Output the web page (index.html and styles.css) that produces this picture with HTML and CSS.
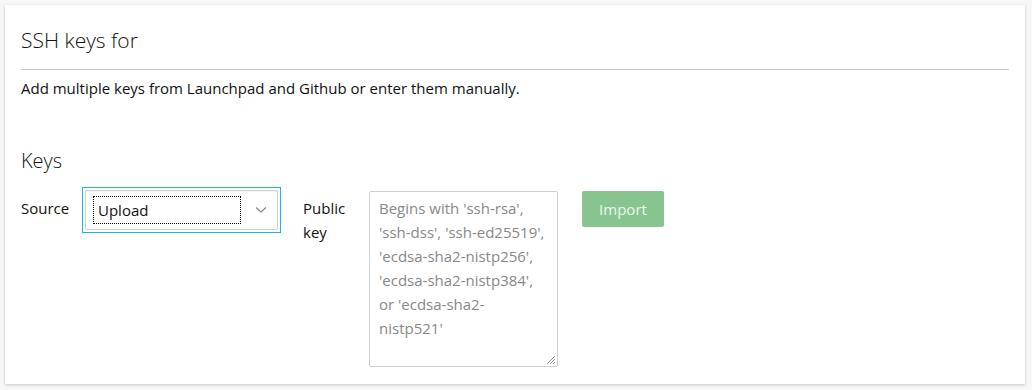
FILE: index.html
```html
<!DOCTYPE html>
<html>
<head>
<meta charset="utf-8">
<link rel="stylesheet" href="styles.css">
</head>
<body>
<div class="card">
  <h2 class="title">SSH keys for</h2>
  <hr class="rule">
  <p class="intro">Add multiple keys from Launchpad and Github or enter them manually.</p>
  <h3 class="section">Keys</h3>
  <div class="form-row">
    <label class="label label-source">Source</label>
    <div class="select-ring">
      <div class="select">
        <span class="select-value">Upload</span>
        <svg class="chevron" width="12" height="8" viewBox="0 0 12 8"><path d="M1 1.5 L6 6 L11 1.5" fill="none" stroke="#888" stroke-width="1.2"/></svg>
      </div>
    </div>
    <label class="label label-key">Public key</label>
    <div class="textarea">
      <span class="placeholder">Begins with 'ssh-rsa', 'ssh-dss', 'ssh-ed25519', 'ecdsa-sha2-nistp256', 'ecdsa-sha2-nistp384', or 'ecdsa-sha2-nistp521'</span>
      <svg class="grip" width="11" height="11" viewBox="0 0 11 11"><path d="M10 2 L2 10 M10 5 L5 10 M10 8 L8 10" stroke="#999" stroke-width="1"/></svg>
    </div>
    <button class="btn">Import</button>
  </div>
</div>
</body>
</html>
```

FILE: styles.css
```css
* { box-sizing: border-box; }
html, body { margin: 0; padding: 0; }
body {
  background: #f7f7f7;
  font-family: "Open Sans", "Noto Sans", sans-serif;
  color: #111;
  padding: 5px 7px 6px 5px;
}
.card {
  background: #fff;
  box-shadow: 0 1px 3px rgba(0,0,0,0.2);
  padding: 0 16px 17px 16px;
  height: 379px;
}
.title {
  margin: 0;
  padding-top: 21px;
  font-size: 21px;
  font-weight: 300;
  line-height: 28px;
}
.rule {
  border: 0;
  border-top: 1px solid #cdcdcd;
  margin: 15px 0 0 0;
}
.intro {
  margin: 8px 0 0 0;
  font-size: 15px;
  line-height: 20px;
}
.section {
  margin: 49px 0 0 0;
  font-size: 20px;
  font-weight: 300;
  line-height: 28px;
}
.form-row {
  display: flex;
  align-items: flex-start;
  margin-top: 12px;
}
.label {
  font-size: 15px;
  line-height: 24px;
  padding-top: 9px;
}
.label-source { width: 61px; }
.label-key { width: 66px; margin-left: 22px; }
.select-ring {
  border: 1px solid #19b6ee;
  padding: 2px;
  width: 199px;
  height: 46px;
}
.select {
  border: 1px solid #d0d0d0;
  border-radius: 2px;
  box-shadow: inset 0 1px 1px rgba(0,0,0,0.05);
  height: 40px;
  display: flex;
  align-items: center;
  justify-content: space-between;
  padding: 0 8px 0 8px;
}
.select-value {
  outline: 1px dotted #000;
  width: 146px;
  height: 26px;
  font-size: 15px;
  line-height: 26px;
  padding-left: 4px;
}
.chevron { margin-right: 2px; }
.textarea {
  position: relative;
  width: 189px;
  height: 176px;
  margin-top: 4px;
  border: 1px solid #cfcfcf;
  border-radius: 2px;
  padding: 4px 9px;
  font-size: 15px;
  line-height: 24px;
  color: #888;
}
.grip { position: absolute; right: 1px; bottom: 1px; }
.btn {
  margin-left: 24px;
  margin-top: 4px;
  width: 82px;
  height: 36px;
  border: 0;
  border-radius: 2px;
  background: #87c490;
  color: #eef7ee;
  font-family: inherit;
  font-size: 15px;
}
```
